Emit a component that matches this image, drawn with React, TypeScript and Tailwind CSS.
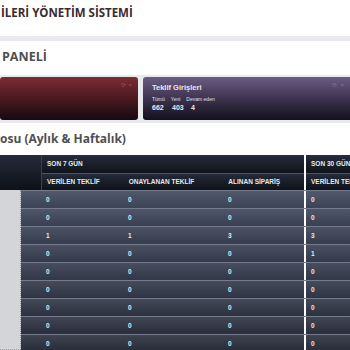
const rows: number[][] = [
  [0, 0, 0, 0],
  [0, 0, 0, 0],
  [1, 1, 3, 3],
  [0, 0, 0, 1],
  [0, 0, 0, 0],
  [0, 0, 0, 0],
  [0, 0, 0, 0],
  [0, 0, 0, 0],
  [0, 0, 0, 0],
];

function CardTools() {
  return (
    <div className="absolute top-[5px] right-[6px] flex gap-[3px] text-[6px] leading-none text-white/25">
      <span>⟳</span>
      <span>×</span>
    </div>
  );
}

function Table() {
  return (
    <div className="flex flex-col text-[6.5px] font-bold text-[#e6e9ef] font-['Liberation_Sans',sans-serif]">
      {/* header */}
      <div className="flex h-[35px]">
        <div className="w-[41px] bg-gradient-to-b from-[#242b3a] to-[#0e1118]" />
        <div className="flex w-[263px] flex-col border-l border-[#3a4152]">
          <div className="flex h-[18px] items-center bg-gradient-to-b from-[#262d3c] to-[#10131a] px-[5px] uppercase">
            SON 7 GÜN
          </div>
          <div className="h-px bg-[#4d5566]" />
          <div className="flex h-[16px] items-center bg-gradient-to-b from-[#232a39] to-[#0f1218] uppercase">
            <div className="w-[82px] px-[5px]">VERİLEN TEKLİF</div>
            <div className="w-[100px] px-[5px]">ONAYLANAN TEKLİF</div>
            <div className="w-[81px] px-[5px]">ALINAN SİPARİŞ</div>
          </div>
        </div>
        <div className="w-[2px] bg-white" />
        <div className="flex min-w-0 flex-1 flex-col overflow-hidden whitespace-nowrap">
          <div className="flex h-[18px] items-center bg-gradient-to-b from-[#262d3c] to-[#10131a] px-[5px] uppercase">
            SON 30 GÜN
          </div>
          <div className="h-px bg-[#4d5566]" />
          <div className="flex h-[16px] items-center bg-gradient-to-b from-[#232a39] to-[#0f1218] px-[5px] uppercase">
            VERİLEN TEKLİF
          </div>
        </div>
      </div>
      {/* body */}
      <div className="flex">
        <div className="mb-[2px] w-[21px] border-r border-b border-dotted border-[#9a9da2] bg-[#d3d5d8]" />
        <div className="flex flex-1 flex-col bg-gradient-to-b from-[#434b60] to-[#2b303d]">
          {rows.map((r, i) => (
            <div
              key={i}
              className="flex h-[18px] items-center border-t border-[#737b8c] bg-gradient-to-b from-white/8 to-black/5"
            >
              <div className="w-[20px]" />
              <div className="w-[82px] px-[5px]">{r[0]}</div>
              <div className="w-[100px] px-[5px]">{r[1]}</div>
              <div className="w-[81px] px-[5px]">{r[2]}</div>
              <div className="h-full w-[2px] bg-white" />
              <div className="flex-1 px-[5px]">{r[3]}</div>
            </div>
          ))}
        </div>
      </div>
    </div>
  );
}

export default function App() {
  return (
    <div className="h-[350px] w-[350px] overflow-hidden bg-[#e8eaed] font-['Open_Sans',sans-serif]">
      <div className="h-[36px] bg-white pt-[4px] pl-px">
        <div className="text-[11.5px] font-bold text-[#3b2a31]">İLERİ YÖNETİM SİSTEMİ</div>
      </div>
      <div className="mt-[5px] h-[34px] bg-white pt-[7px] pl-[2px]">
        <div className="text-[12.5px] font-bold text-[#4f4f52]">PANELİ</div>
      </div>
      <div className="mt-[2px] flex h-[43px] gap-[5px]">
        <div className="relative w-[138px] rounded-[3px] bg-gradient-to-b from-[#7c2c33] via-[#4a1a20] to-[#150a10]">
          <CardTools />
        </div>
        <div className="relative flex-1 rounded-l-[3px] bg-gradient-to-b from-[#6b5c83] via-[#3e3450] to-[#14111b] px-[9px] pt-[5px] font-['Liberation_Sans',sans-serif] text-white">
          <CardTools />
          <div className="text-[7.5px] font-bold leading-[12px] text-[#ece8f2]">Teklif Girişleri</div>
          <div className="mt-[2px] flex gap-[6px] text-[5px] leading-[7px] text-[#e4e0ea]">
            <span>Tümü</span>
            <span>Yeni</span>
            <span>Devam eden</span>
          </div>
          <div className="flex text-[7px] font-bold leading-[10px] text-[#eeeaf3]">
            <span className="w-[20px]">662</span>
            <span className="w-[19px]">403</span>
            <span>4</span>
          </div>
        </div>
      </div>
      <div className="mt-[3px] bg-white">
        <div className="flex h-[32px] items-center pb-[1px] text-[12px] font-bold text-[#4f4f52]">
          osu (Aylık &amp; Haftalık)
        </div>
        <Table />
      </div>
    </div>
  );
}
